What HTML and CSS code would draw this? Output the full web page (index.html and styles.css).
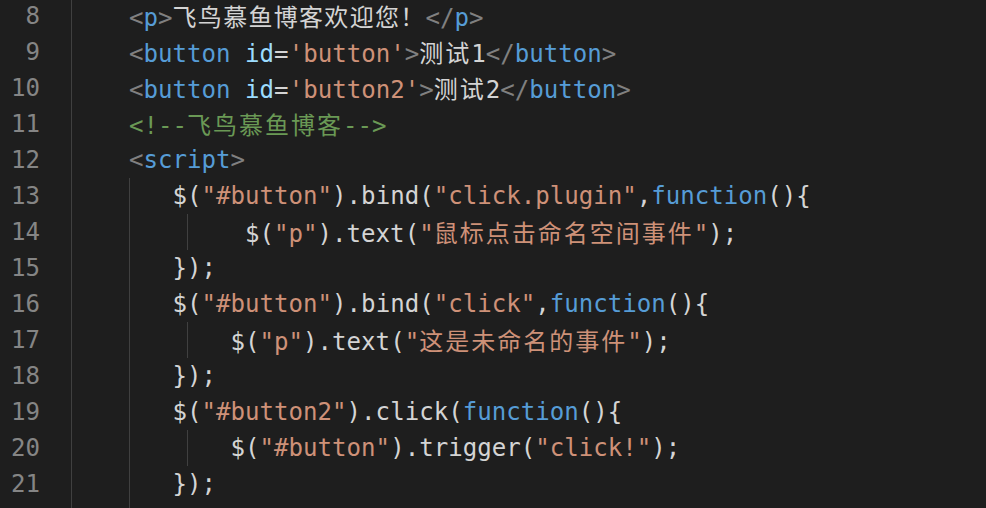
FILE: index.html
```html
<!DOCTYPE html>
<html lang="zh">
<head>
<meta charset="utf-8">
<title>editor</title>
<link rel="stylesheet" href="styles.css">
</head>
<body>
<div class="editor">
  <div class="line"><span class="ln">8</span><span class="code"><span class="g"></span><span class="pn">&lt;</span><span class="tag">p</span><span class="pn">&gt;</span><span class="h tight">飞鸟慕鱼博客欢迎您！</span><span class="pn">&lt;/</span><span class="tag">p</span><span class="pn">&gt;</span></span></div>
  <div class="line"><span class="ln">9</span><span class="code"><span class="g"></span><span class="pn">&lt;</span><span class="tag">button</span> <span class="attr">id</span>=<span class="str">'button'</span><span class="pn">&gt;</span><span class="h">测试</span>1<span class="pn">&lt;/</span><span class="tag">button</span><span class="pn">&gt;</span></span></div>
  <div class="line"><span class="ln">10</span><span class="code"><span class="g"></span><span class="pn">&lt;</span><span class="tag">button</span> <span class="attr">id</span>=<span class="str">'button2'</span><span class="pn">&gt;</span><span class="h">测试</span>2<span class="pn">&lt;/</span><span class="tag">button</span><span class="pn">&gt;</span></span></div>
  <div class="line"><span class="ln">11</span><span class="code"><span class="g"></span><span class="cm">&lt;!--<span class="h">飞鸟慕鱼博客</span>--&gt;</span></span></div>
  <div class="line"><span class="ln">12</span><span class="code"><span class="g"></span><span class="pn">&lt;</span><span class="tag">script</span><span class="pn">&gt;</span></span></div>
  <div class="line"><span class="ln">13</span><span class="code"><span class="g"></span><span class="g g3"></span>$(<span class="str">"#button"</span>).bind(<span class="str">"click.plugin"</span>,<span class="kw">function</span>(){</span></div>
  <div class="line"><span class="ln">14</span><span class="code"><span class="g"></span><span class="g"></span><span class="g"></span>$(<span class="str">"p"</span>).text(<span class="str">"<span class="h">鼠标点击命名空间事件</span>"</span>);</span></div>
  <div class="line"><span class="ln">15</span><span class="code"><span class="g"></span><span class="g g3"></span>});</span></div>
  <div class="line"><span class="ln">16</span><span class="code"><span class="g"></span><span class="g g3"></span>$(<span class="str">"#button"</span>).bind(<span class="str">"click"</span>,<span class="kw">function</span>(){</span></div>
  <div class="line"><span class="ln">17</span><span class="code"><span class="g"></span><span class="g"></span><span class="g g3"></span>$(<span class="str">"p"</span>).text(<span class="str">"<span class="h">这是未命名的事件</span>"</span>);</span></div>
  <div class="line"><span class="ln">18</span><span class="code"><span class="g"></span><span class="g g3"></span>});</span></div>
  <div class="line"><span class="ln">19</span><span class="code"><span class="g"></span><span class="g g3"></span>$(<span class="str">"#button2"</span>).click(<span class="kw">function</span>(){</span></div>
  <div class="line"><span class="ln">20</span><span class="code"><span class="g"></span><span class="g"></span><span class="g g3"></span>$(<span class="str">"#button"</span>).trigger(<span class="str">"click!"</span>);</span></div>
  <div class="line"><span class="ln">21</span><span class="code"><span class="g"></span><span class="g g3"></span>});</span></div>
  <div class="line"><span class="ln"></span><span class="code"><span class="g"></span><span class="g g3"></span></span></div>
</div>
</body>
</html>
```

FILE: styles.css
```css
html, body {
  margin: 0;
  padding: 0;
  background: #1e1e1e;
  overflow: hidden;
}

.editor {
  width: 986px;
  height: 512px;
  margin-top: -2px;
  overflow: hidden;
  background: #1e1e1e;
  font-family: "DejaVu Sans Mono", "Liberation Mono", monospace;
  font-size: 24.1px;
  color: #d4d4d4;
}

.line {
  display: flex;
  height: 36px;
  line-height: 36px;
  white-space: pre;
}

.ln {
  width: 40px;
  padding-right: 31px;
  text-align: right;
  color: #858585;
  flex: none;
}

.code {
  display: block;
  height: 36px;
  white-space: pre;
}

.g {
  display: inline-block;
  width: 4ch;
  height: 36px;
  box-sizing: border-box;
  border-left: 1px solid #404040;
  vertical-align: top;
}

.g3 {
  width: 3ch;
}

.h {
  font-family: "Noto Sans CJK SC", sans-serif;
  font-size: 24px;
  letter-spacing: 2px;
  line-height: 36px;
}

.tight {
  letter-spacing: 1.3px;
}

.pn { color: #808080; }
.tag { color: #569cd6; }
.attr { color: #9cdcfe; }
.str { color: #ce9178; }
.kw { color: #569cd6; }
.cm { color: #6a9955; }
```
